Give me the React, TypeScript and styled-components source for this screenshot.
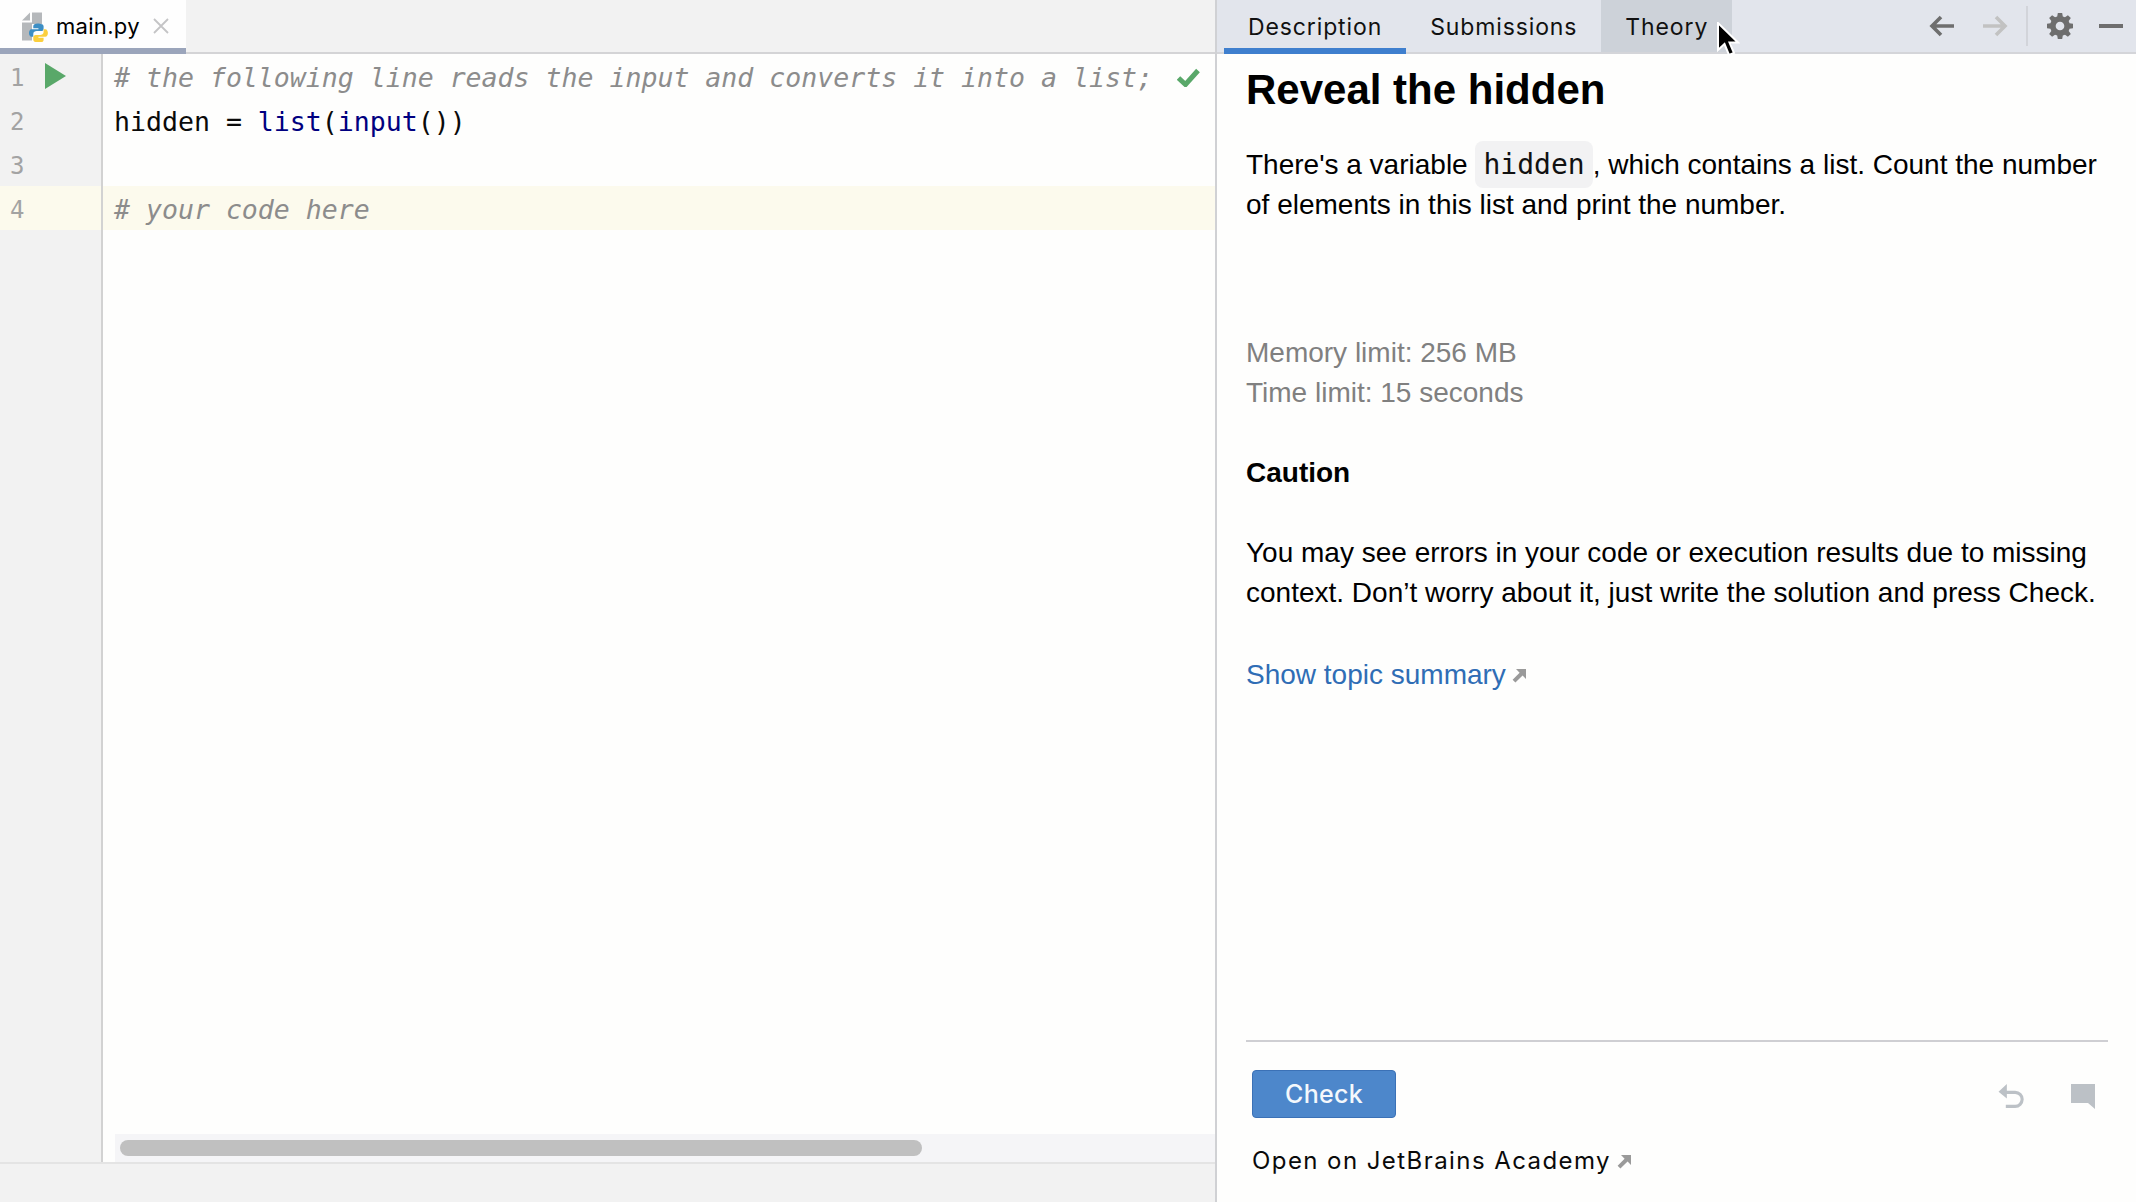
import React from "react";
import styled, { createGlobalStyle } from "styled-components";

const Global = createGlobalStyle`
  html, body { margin: 0; padding: 0; background: #fefefd; }
  * { box-sizing: border-box; }
`;

const Page = styled.div`
  position: relative;
  width: 2136px;
  height: 1202px;
  overflow: hidden;
  display: grid;
  grid-template-columns: 1215px 1fr;
  font-family: "Liberation Sans", Arial, sans-serif;
  color: #000;
  background: #fefefd;
`;

const EditorPane = styled.section`
  display: flex;
  flex-direction: column;
  min-height: 0;
`;

const EditorTabs = styled.div`
  height: 54px;
  flex: none;
  background: #f2f2f2;
  border-bottom: 2px solid #d4d4d6;
  display: flex;
`;

const FileTab = styled.div`
  width: 186px;
  height: 54px;
  background: #fefefe;
  border-bottom: 6px solid #9ba5bb;
  display: flex;
  align-items: center;
  padding: 3px 0 0 22px;
  gap: 6px;
  font-family: Inter, sans-serif;
  font-size: 22px;
  letter-spacing: 0.3px;
`;

const EditorBody = styled.div`
  flex: 1;
  min-height: 0;
  display: grid;
  grid-template-columns: 103px 1fr;
`;

const Gutter = styled.div`
  background: #f2f2f2;
  border-right: 2px solid #d2d2d2;
`;

const GutterRow = styled.div<{ $active?: boolean }>`
  height: 44px;
  display: flex;
  align-items: center;
  gap: 21px;
  padding: 4px 0 0 10px;
  background: ${(p) => (p.$active ? "#fcfaed" : "transparent")};
  font-family: "DejaVu Sans Mono", monospace;
  font-size: 24px;
  color: #a3a3a3;
`;

const CodeColumn = styled.div`
  display: flex;
  flex-direction: column;
  min-width: 0;
`;

const CodeRow = styled.div<{ $active?: boolean }>`
  height: 44px;
  flex: none;
  display: flex;
  align-items: center;
  justify-content: space-between;
  padding: 2px 15px 0 11px;
  background: ${(p) => (p.$active ? "#fcfaed" : "transparent")};
  font-family: "DejaVu Sans Mono", monospace;
  font-size: 26.56px;
  white-space: pre;
  color: #0a0a0a;
`;

const Comment = styled.span`
  font-style: italic;
  color: #8c8c8c;
`;

const Builtin = styled.span`
  color: #000080;
`;

const ScrollTrack = styled.div`
  margin-top: auto;
  margin-left: 12px;
  height: 28px;
  background: #f5f5f7;
  padding: 6px 0 0 5px;
`;

const ScrollThumb = styled.div`
  width: 802px;
  height: 16px;
  border-radius: 8px;
  background: #c0c0c0;
`;

const StatusBar = styled.div`
  height: 40px;
  flex: none;
  background: #f2f2f2;
  border-top: 2px solid #e4e4e4;
`;

const TaskPane = styled.section`
  border-left: 2px solid #d0d1d4;
  display: flex;
  flex-direction: column;
  min-height: 0;
`;

const TaskHeader = styled.div`
  height: 54px;
  flex: none;
  background: #e2e5ec;
  border-bottom: 2px solid #d4d5d9;
  display: flex;
  padding-left: 7px;
`;

const TaskTab = styled.div<{ $selected?: boolean; $hover?: boolean }>`
  height: ${(p) => (p.$selected ? 54 : 52)}px;
  padding: 2px 24px 0;
  padding-bottom: ${(p) => (p.$selected ? 2 : 0)}px;
  display: flex;
  align-items: center;
  font-family: Inter, sans-serif;
  font-size: 23px;
  letter-spacing: 0.88px;
  color: #111;
  background: ${(p) => (p.$hover ? "#cdd2d9" : "transparent")};
  box-shadow: ${(p) => (p.$selected ? "inset 0 -6px 0 #3f7fce" : "none")};
`;

const HeaderIcons = styled.div`
  margin-left: auto;
  display: flex;
  align-items: center;
  height: 52px;
  padding-right: 13px;
`;

const HeaderIcon = styled.svg<{ $gap?: number }>`
  display: block;
  flex: none;
  margin-left: ${(p) => p.$gap ?? 0}px;
`;

const HeaderSep = styled.div`
  width: 2px;
  height: 40px;
  margin-left: 18px;
  background: #d2d4da;
`;

const TaskContent = styled.div`
  flex: 1;
  min-height: 0;
  display: flex;
  flex-direction: column;
  padding: 0 28px 0 29px;
`;

const Title = styled.h1`
  margin: 10px 0 0;
  font-size: 42px;
  line-height: 52px;
  font-weight: 700;
`;

const Para = styled.p<{ $top: number; $muted?: boolean }>`
  margin: ${(p) => p.$top}px 0 0;
  font-size: 28px;
  line-height: 40px;
  color: ${(p) => (p.$muted ? "#808080" : "#000")};
`;

const InlineCode = styled.code`
  padding: 7px 8px;
  line-height: 1;
  border-radius: 8px;
  background: #f2f2f3;
  font-family: "DejaVu Sans Mono", monospace;
  font-size: 28px;
  color: #111;
`;

const Heading = styled.h2`
  margin: 40px 0 0;
  font-size: 28px;
  line-height: 40px;
  font-weight: 700;
`;

const TopicLink = styled.div`
  margin-top: 42px;
  display: flex;
  align-items: center;
  gap: 6px;
  font-size: 28px;
  line-height: 40px;
  color: #2f6db5;
`;

const Footer = styled.div`
  margin-top: auto;
  height: 162px;
  flex: none;
  border-top: 2px solid #cfcfd3;
  padding: 28px 0 0 6px;
  display: flex;
  flex-direction: column;
`;

const FooterRow = styled.div`
  display: flex;
  align-items: center;
  justify-content: space-between;
  padding-right: 13px;
`;

const CheckButton = styled.button`
  width: 144px;
  height: 48px;
  border: 1px solid #3b71b6;
  border-radius: 4px;
  background: #4d87cb;
  color: #f4f8fc;
  font-family: Inter, sans-serif;
  font-size: 25px;
  font-weight: 500;
  letter-spacing: 0.3px;
  padding: 0;
`;

const FooterIcons = styled.div`
  display: flex;
  align-items: center;
  gap: 46px;
  padding-top: 4px;
`;

const AcademyLink = styled.div`
  margin-top: 23px;
  display: flex;
  align-items: center;
  gap: 6px;
  font-family: Inter, sans-serif;
  font-size: 24px;
  line-height: 40px;
  letter-spacing: 1.43px;
  color: #0a0a0a;
`;

const Cursor = styled.svg`
  position: absolute;
  left: 1716px;
  top: 22px;
`;

const ExternalArrow = () => (
  <svg width="15" height="15" viewBox="0 0 15 15">
    <path d="M4 1h10v10l-3.4-3.4L3.4 14.6 0.6 11.8l7-7z" fill="#9a9a9a" />
  </svg>
);

const PythonFileIcon = () => (
  <svg width="28" height="32" viewBox="0 0 28 32" style={{ flex: "none" }}>
    <path d="M0 10.500 8 2.500v8z" fill="#b5b8bb" />
    <path d="M10 2.500h10V14H10zM0 12.500h10v18H0z" fill="#b5b8bb" />
    <g transform="translate(4.400 4) scale(.86 .95)">
      <path d="M13 10c-3 0-5 1-5 3v2h6v1H6c-2 0-3 2-3 4s1 4 3 4h2v-3c0-2 2-3 4-3h5c2 0 3-1 3-3v-2c0-2-3-3-7-3z" fill="#3d8ec4" />
      <path d="M15 30c3 0 5-1 5-3v-2h-6v-1h8c2 0 3-2 3-4s-1-4-3-4h-2v3c0 2-2 3-4 3h-5c-2 0-3 1-3 3v2c0 2 3 3 7 3z" fill="#fbcf3d" />
    </g>
  </svg>
);

export default function App() {
  return (
    <>
      <Global />
      <Page>
        <EditorPane>
          <EditorTabs>
            <FileTab>
              <PythonFileIcon />
              <span>main.py</span>
              <svg width="16" height="16" viewBox="0 0 16 16" style={{ marginLeft: 7 }}>
                <path d="M1 1l14 14M15 1L1 15" stroke="#c4c4c6" strokeWidth="1.8" />
              </svg>
            </FileTab>
          </EditorTabs>
          <EditorBody>
            <Gutter>
              <GutterRow>
                <span>1</span>
                <svg width="22" height="26" viewBox="0 0 22 26" style={{ marginTop: -5 }}>
                  <path d="M0 0l21 13L0 26z" fill="#59a869" />
                </svg>
              </GutterRow>
              <GutterRow>2</GutterRow>
              <GutterRow>3</GutterRow>
              <GutterRow $active>4</GutterRow>
            </Gutter>
            <CodeColumn>
              <CodeRow>
                <Comment># the following line reads the input and converts it into a list;</Comment>
                <svg width="23" height="19" viewBox="0 0 23 19">
                  <path d="M1.500 10l7 6.500L21 2.500" fill="none" stroke="#59a869" strokeWidth="5" />
                </svg>
              </CodeRow>
              <CodeRow>
                <span>
                  hidden = <Builtin>list</Builtin>(<Builtin>input</Builtin>())
                </span>
              </CodeRow>
              <CodeRow />
              <CodeRow $active>
                <Comment># your code here</Comment>
              </CodeRow>
              <ScrollTrack>
                <ScrollThumb />
              </ScrollTrack>
            </CodeColumn>
          </EditorBody>
          <StatusBar />
        </EditorPane>
        <TaskPane>
          <TaskHeader>
            <TaskTab $selected>Description</TaskTab>
            <TaskTab>Submissions</TaskTab>
            <TaskTab $hover>Theory</TaskTab>
            <HeaderIcons>
              <HeaderIcon width="26" height="22" viewBox="0 0 26 22">
                <path d="M25 11H4M12 2l-9 9 9 9" fill="none" stroke="#6e6e6e" strokeWidth="3.600" />
              </HeaderIcon>
              <HeaderIcon $gap={27} width="26" height="22" viewBox="0 0 26 22">
                <path d="M1 11h21M14 2l9 9-9 9" fill="none" stroke="#c2c2c2" strokeWidth="3.600" />
              </HeaderIcon>
              <HeaderSep />
              <HeaderIcon $gap={19} width="26" height="26" viewBox="0 0 24 24">
                <path
                  fillRule="evenodd"
                  fill="#6e6e6e"
                  d="M10 0h4l.6 3.2 2 .8L19.3 2 22 4.7l-2 2.700.8 2L24 10v4l-3.200.6-.8 2 2 2.700-2.700 2.700-2.700-2-2 .8L14 24h-4l-.6-3.200-2-.8L4.700 22 2 19.300l2-2.700-.8-2L0 14v-4l3.200-.6.8-2-2-2.700L4.700 2l2.700 2 2-.8zM12 8a4 4 0 1 0 0 8 4 4 0 0 0 0-8z"
                />
              </HeaderIcon>
              <HeaderIcon $gap={26} width="24" height="4" viewBox="0 0 24 4">
                <rect width="24" height="4" fill="#6e6e6e" />
              </HeaderIcon>
            </HeaderIcons>
          </TaskHeader>
          <TaskContent>
            <Title>Reveal the hidden</Title>
            <Para $top={29}>
              There's a variable <InlineCode>hidden</InlineCode>, which contains a list. Count the number of elements in this list and print the number.
            </Para>
            <Para $top={108} $muted>
              Memory limit: 256 MB
              <br />
              Time limit: 15 seconds
            </Para>
            <Heading>Caution</Heading>
            <Para $top={40}>
              You may see errors in your code or execution results due to missing context. Don’t worry about it, just write the solution and press Check.
            </Para>
            <TopicLink>
              <span>Show topic summary</span>
              <ExternalArrow />
            </TopicLink>
            <Footer>
              <FooterRow>
                <CheckButton>Check</CheckButton>
                <FooterIcons>
                  <svg width="28" height="27" viewBox="0 0 26 26">
                    <path d="M9 1L1 8.500 9 15V10.500h8a5 5 0 0 1 0 10.500H8V24h9a7.500 7.500 0 0 0 0-16.500H9z" fill="#bcc1c6" />
                  </svg>
                  <svg width="24" height="25" viewBox="0 0 24 25">
                    <path d="M0 0h24v25l-7-6H0z" fill="#bcc1c6" />
                  </svg>
                </FooterIcons>
              </FooterRow>
              <AcademyLink>
                <span>Open on JetBrains Academy</span>
                <ExternalArrow />
              </AcademyLink>
            </Footer>
          </TaskContent>
        </TaskPane>
        <Cursor width="24" height="36" viewBox="0 0 24 36">
          <path d="M2 1v27l6.500-6 4.500 11 5-2-4.500-10.500H22z" fill="#000" stroke="#fff" strokeWidth="2" />
        </Cursor>
      </Page>
    </>
  );
}
